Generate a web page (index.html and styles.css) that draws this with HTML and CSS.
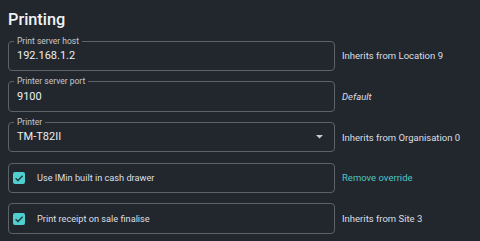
FILE: index.html
```html
<!DOCTYPE html>
<html>
<head>
<meta charset="utf-8">
<link rel="stylesheet" href="styles.css">
</head>
<body>
<div class="page">
  <h1 class="title">Printing</h1>
  <div class="rows">
    <div class="row">
      <div class="field">
        <span class="label">Print server host</span>
        <span class="value">192.168.1.2</span>
      </div>
      <span class="note">Inherits from Location 9</span>
    </div>
    <div class="row">
      <div class="field">
        <span class="label">Printer server port</span>
        <span class="value">9100</span>
      </div>
      <span class="note italic">Default</span>
    </div>
    <div class="row">
      <div class="field select">
        <span class="label">Printer</span>
        <span class="value">TM-T82II</span>
        <svg class="arrow" width="7" height="4" viewBox="0 0 7 4"><path d="M0 0 L7 0 L3.5 3.6 Z" fill="#c9cdd2"/></svg>
      </div>
      <span class="note">Inherits from Organisation 0</span>
    </div>
    <div class="row">
      <div class="field check">
        <span class="box"><svg width="12" height="12" viewBox="0 0 12 12"><path d="M2.6 6.2 L5 8.5 L9.6 3.8" fill="none" stroke="#1f3a3d" stroke-width="1.4"/></svg></span>
        <span class="ctext">Use IMin built in cash drawer</span>
      </div>
      <span class="note link">Remove override</span>
    </div>
    <div class="row">
      <div class="field check">
        <span class="box"><svg width="12" height="12" viewBox="0 0 12 12"><path d="M2.6 6.2 L5 8.5 L9.6 3.8" fill="none" stroke="#1f3a3d" stroke-width="1.4"/></svg></span>
        <span class="ctext">Print receipt on sale finalise</span>
      </div>
      <span class="note">Inherits from Site 3</span>
    </div>
  </div>
</div>
</body>
</html>
```
FILE: styles.css
```css
html, body {
  margin: 0;
  padding: 0;
  background: #22272e;
  font-family: Roboto, "Liberation Sans", sans-serif;
}
.page {
  padding: 10px 8px 0 8px;
}
.title {
  margin: 0;
  font-size: 16.3px;
  line-height: 20px;
  font-weight: 500;
  color: #f0f2f4;
}
.rows {
  margin-top: 10.7px;
  display: flex;
  flex-direction: column;
  gap: 10.15px;
}
.row {
  display: flex;
  align-items: center;
  gap: 7px;
}
.field {
  position: relative;
  box-sizing: border-box;
  width: 327px;
  height: 30.5px;
  border: 1px solid #5c626a;
  border-radius: 4px;
  display: flex;
  align-items: center;
  padding-left: 8px;
}
.label {
  position: absolute;
  top: -6px;
  left: 5px;
  padding: 0 3px;
  background: #22272e;
  font-size: 8.5px;
  line-height: 11px;
  color: #c4c8cc;
}
.value {
  font-size: 11px;
  color: #eceef0;
  margin-top: -1px;
}
.select {
  justify-content: space-between;
  padding-right: 11px;
}
.arrow {
  display: block;
}
.check {
  padding-left: 4px;
  gap: 12px;
}
.box {
  width: 12px;
  height: 12px;
  border-radius: 2px;
  background: #4fcfcf;
  display: flex;
}
.ctext {
  font-size: 9.2px;
  color: #dcdfe2;
}
.note {
  font-size: 9.5px;
  color: #dcdfe2;
}
.italic {
  font-style: italic;
}
.link {
  color: #4ec6c4;
}
```
